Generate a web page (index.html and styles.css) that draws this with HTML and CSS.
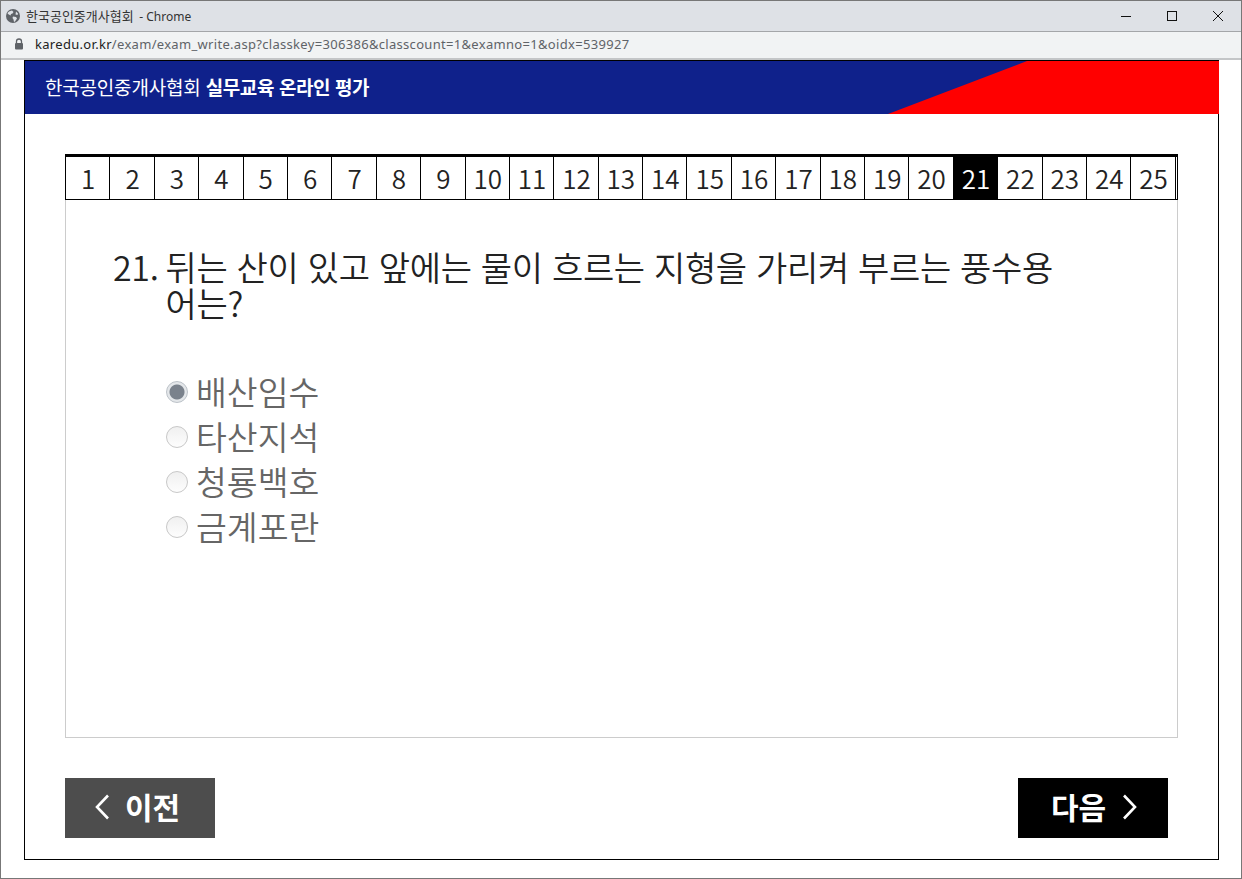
FILE: index.html
```html
<!DOCTYPE html>
<html lang="ko">

<head>
    <meta charset="UTF-8">
    <title>한국공인중개사협회 - Chrome</title>
    <link rel="stylesheet" href="styles.css">
</head>

<body>
    <div class="window">
        <div class="titlebar">
            <svg class="globe" width="14" height="14" viewBox="0 0 14 14">
                <circle cx="7" cy="7" r="7" fill="#5f6368" />
                <path d="M3 2.500l3-1 1.500 1.500-1 1.500-1.500 .5-.5 1.500-2.500-1.500-.5-1zM7 7.500l3 .5 1 1.500-2 3-1 .5-.5-2.500-1-1.500zM10 2.500l2 2-.5 1.500-2-.5z" fill="#dee1e6" />
            </svg>
            <span class="title">한국공인중개사협회 <span class="title-app">- Chrome</span></span>
            <div class="controls">
                <svg width="12" height="12" viewBox="0 0 12 12"><path d="M1 6.500h10" stroke="#111" fill="none" /></svg>
                <svg width="12" height="12" viewBox="0 0 12 12"><rect x="1.500" y="1.500" width="9" height="9" stroke="#111" fill="none" /></svg>
                <svg width="12" height="12" viewBox="0 0 12 12"><path d="M1 1l10 10M11 1L1 11" stroke="#111" fill="none" /></svg>
            </div>
        </div>
        <div class="addressbar">
            <svg class="lock" width="10" height="12" viewBox="0 0 10 12">
                <path d="M2.500 5V3.500a2.500 2.500 0 0 1 5 0V5" stroke="#5f6368" stroke-width="1.300" fill="none" />
                <rect x="1" y="5" width="8" height="6.500" rx="1" fill="#5f6368" />
            </svg>
            <span class="url"><span class="host">karedu.or.kr</span>/exam/exam_write.asp?classkey=306386&amp;classcount=1&amp;examno=1&amp;oidx=539927</span>
        </div>

        <div class="page">
            <header class="banner">
                <h1>한국공인중개사협회 <strong>실무교육 온라인 평가</strong></h1>
            </header>

            <main class="exam">
                <ul class="tabs">
                    <li>1</li>
                    <li>2</li>
                    <li>3</li>
                    <li>4</li>
                    <li>5</li>
                    <li>6</li>
                    <li>7</li>
                    <li>8</li>
                    <li>9</li>
                    <li>10</li>
                    <li>11</li>
                    <li>12</li>
                    <li>13</li>
                    <li>14</li>
                    <li>15</li>
                    <li>16</li>
                    <li>17</li>
                    <li>18</li>
                    <li>19</li>
                    <li>20</li>
                    <li class="current">21</li>
                    <li>22</li>
                    <li>23</li>
                    <li>24</li>
                    <li>25</li>
                </ul>

                <section class="question-box">
                    <div class="question">
                        <span class="question-no">21.</span>
                        <span class="question-text">뒤는 산이 있고 앞에는 물이 흐르는 지형을 가리켜 부르는 풍수용어는?</span>
                    </div>
                    <form class="answers">
                        <label class="answer"><input type="radio" name="answer" checked>배산임수</label>
                        <label class="answer"><input type="radio" name="answer">타산지석</label>
                        <label class="answer"><input type="radio" name="answer">청룡백호</label>
                        <label class="answer"><input type="radio" name="answer">금계포란</label>
                    </form>
                </section>

                <nav class="pager">
                    <a class="btn btn-prev">
                        <svg width="14" height="26" viewBox="0 0 14 26"><path d="M13 1.500L2 13l11 11.500" stroke="#fff" stroke-width="2.600" fill="none" /></svg>
                        이전
                    </a>
                    <a class="btn btn-next">
                        다음
                        <svg width="14" height="26" viewBox="0 0 14 26"><path d="M1 1.500L12 13 1 24.500" stroke="#fff" stroke-width="2.600" fill="none" /></svg>
                    </a>
                </nav>
            </main>
        </div>
    </div>
</body>

</html>
```

FILE: styles.css
```css
html,
body {
    margin: 0;
    padding: 0;
    background: #ffffff;
}

body {
    font-family: "Noto Sans CJK KR", "Noto Sans", sans-serif;
    color: #222222;
}

.window {
    width: 1242px;
    height: 879px;
    box-sizing: border-box;
    border: 1px solid #777777;
    display: flex;
    flex-direction: column;
    overflow: hidden;
}

/* browser chrome */
.titlebar {
    height: 29px;
    flex: none;
    background: #dee1e6;
    border-bottom: 1px solid #a4a6a9;
    display: flex;
    align-items: center;
    padding: 0 0 1px 5px;
    font-size: 13px;
    color: #333333;
}

.globe {
    margin-right: 6px;
}

.title {
    line-height: 20px;
    margin-top: 1px;
}

.title-app {
    font-family: "Noto Sans", sans-serif;
    font-size: 12px;
    margin-left: 2px;
}

.controls {
    margin-left: auto;
    display: flex;
    gap: 34px;
    padding-right: 17px;
}

.addressbar {
    height: 24px;
    flex: none;
    background: #f1f3f4;
    border-bottom: 2px solid #c4c6c8;
    display: flex;
    align-items: center;
    padding: 0 0 2px 13px;
    font-family: "Noto Sans", sans-serif;
    font-size: 13px;
    letter-spacing: 0.31px;
    color: #5f6368;
}

.lock {
    margin-right: 11px;
}

.host {
    color: #222222;
}

/* page */
.page {
    flex: none;
    width: 1195px;
    height: 800px;
    box-sizing: border-box;
    margin-left: 23px;
    border: 1px solid #000000;
    display: flex;
    flex-direction: column;
}

.banner {
    position: relative;
    height: 53px;
    flex: none;
    margin-right: -1px;
    background: #0f218b;
    display: flex;
    align-items: center;
    padding: 0 0 2px 20px;
    box-sizing: border-box;
    overflow: hidden;
}

.banner::after {
    content: "";
    position: absolute;
    top: 0;
    right: 0;
    bottom: 0;
    width: 331px;
    background: #ff0000;
    clip-path: polygon(139px 0, 100% 0, 100% 100%, 0 100%);
}

.banner h1 {
    margin: 0;
    font-size: 19px;
    font-weight: 400;
    letter-spacing: -0.2px;
    color: #ffffff;
}

.banner strong {
    font-weight: 700;
    letter-spacing: -0.4px;
}

.exam {
    flex: 1;
    padding: 40px 40px 20px;
    display: flex;
    flex-direction: column;
}

.tabs {
    list-style: none;
    margin: 0;
    padding: 0;
    width: 1113px;
    box-sizing: border-box;
    display: flex;
    border-top: 3px solid #000000;
    border-bottom: 1px solid #000000;
    border-left: 1px solid #000000;
    border-right: 1px solid #000000;
    height: 46px;
}

.tabs li {
    flex: none;
    width: 44.4px;
    box-sizing: border-box;
    border-right: 1px solid #000000;
    padding-left: 1px;
    font-size: 26px;
    font-weight: 350;
    line-height: 42px;
    text-align: center;
    background: #ffffff;
}

.tabs li.current {
    background: #000000;
    color: #ffffff;
}

.question-box {
    width: 1113px;
    height: 538px;
    flex: none;
    box-sizing: border-box;
    border: 1px solid #cccccc;
    border-top: none;
    padding: 49px 47px 0;
}

.question {
    display: flex;
    gap: 7px;
    font-size: 34px;
    font-weight: 350;
    line-height: 36px;
    letter-spacing: -0.33px;
    color: #222222;
    width: 960px;
}

.question-no {
    flex: none;
}

.answers {
    margin: 47px 0 0 53px;
    display: flex;
    flex-direction: column;
}

.answer {
    display: flex;
    align-items: center;
    gap: 8px;
    height: 45px;
    font-size: 33.5px;
    font-weight: 350;
    color: #666666;
}

.answer input {
    appearance: none;
    margin: 2px 0 0;
    width: 22px;
    height: 22px;
    border: 1px solid #c8c8c8;
    border-radius: 50%;
    background: linear-gradient(#f0f0f0, #fdfdfd);
}

.answer input:checked {
    background: radial-gradient(circle, #7a828c 0, #7a828c 7px, #e4e7ea 8px);
    border-color: #bcc2c8;
}

.pager {
    display: flex;
    justify-content: space-between;
    width: 1103px;
    margin-top: 40px;
}

.btn {
    width: 150px;
    height: 60px;
    box-sizing: border-box;
    display: flex;
    align-items: center;
    gap: 16px;
    font-size: 30px;
    font-weight: 700;
    color: #ffffff;
}

.btn svg {
    margin-top: 2px;
}

.btn-prev {
    background: #4d4d4d;
    padding: 0 0 4px 30px;
}

.btn-next {
    background: #000000;
    padding: 0 0 4px 33px;
    gap: 17px;
}
```
